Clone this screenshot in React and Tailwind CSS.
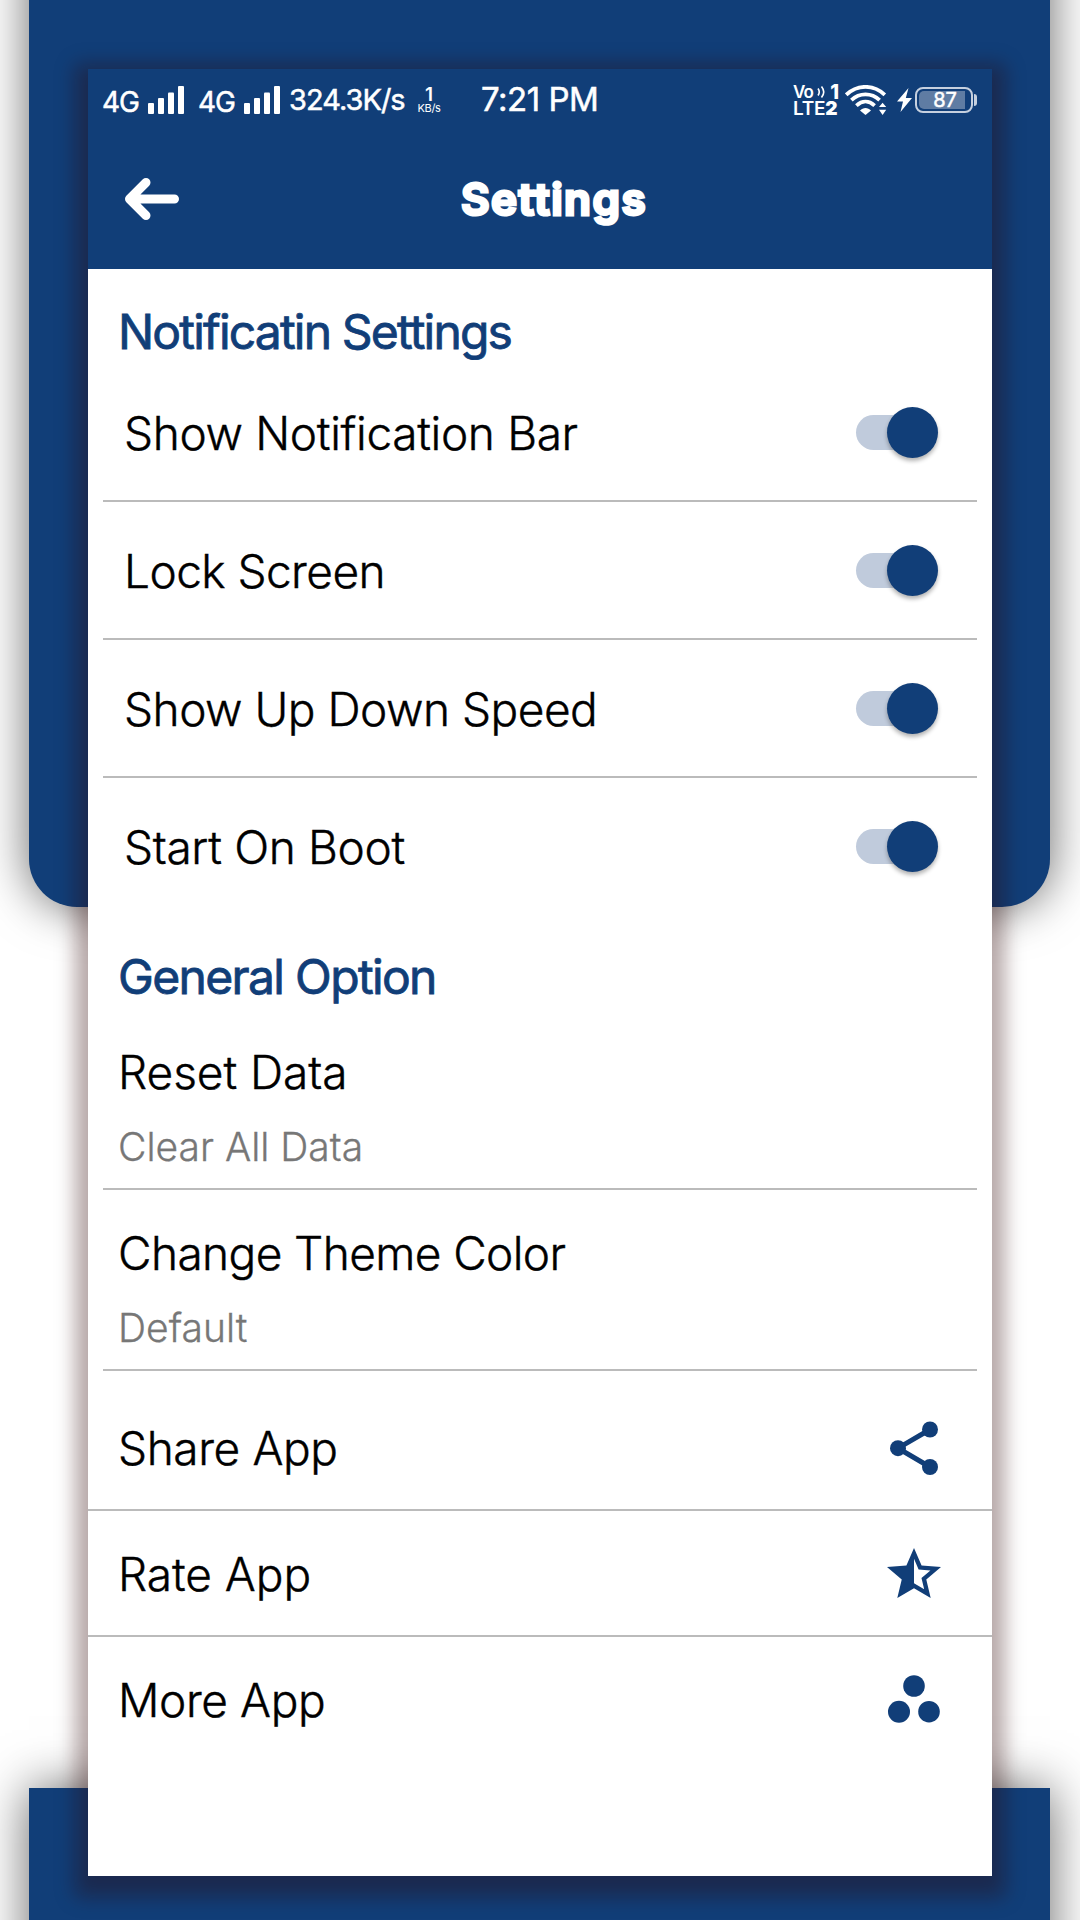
const toggles = [
    { label: "Show Notification Bar", tracking: "tracking-[-0.35px]" },
    { label: "Lock Screen", tracking: "tracking-[-0.55px]" },
    { label: "Show Up Down Speed", tracking: "tracking-[-0.5px]" },
    { label: "Start On Boot", tracking: "tracking-[-0.35px]" },
];

function Signal() {
    return (
        <svg width="36" height="28" viewBox="0 0 36 28" fill="#fff">
            <rect x="0" y="17" width="6" height="11" rx="1" />
            <rect x="10" y="12" width="6" height="16" rx="1" />
            <rect x="20" y="6.500" width="6" height="21.500" rx="1" />
            <rect x="30" y="0" width="6" height="28" rx="1" />
        </svg>
    );
}

function Wifi() {
    return (
        <svg width="42" height="30" viewBox="0 0 42 30" fill="none">
            <g stroke="#fff" strokeWidth="3.800">
                <path d="M1.200 9.800C12.500-.8 28.500-.8 39.800 9.800" />
                <path d="M6.400 15.200C14.500 7.400 26.500 7.400 34.600 15.200" />
                <path d="M11.400 20.600C17 15.400 24 15.400 29.600 20.600" />
            </g>
            <path d="M15 25.600C18 22 23 22 26 25.600L20.500 30Z" fill="#fff" />
            <path d="M34 22L37.600 17.800L41.200 22ZM34 24.800H41.200L37.600 30Z" fill="#fff" />
        </svg>
    );
}

function StatusBar() {
    return (
        <div className="flex h-[62px] items-center pl-[14px] text-white [-webkit-text-stroke:0.5px_white]">
            <span className="w-[46px] pt-[4px] text-[28px] tracking-[-1px]">4G</span>
            <Signal />
            <span className="ml-[14px] w-[46px] pt-[4px] text-[28px] tracking-[-1px]">4G</span>
            <Signal />
            <span className="ml-[9px] w-[118px] text-[29px] tracking-[-1px]">324.3K/s</span>
            <div className="ml-[9px] flex w-[26px] flex-col items-center [-webkit-text-stroke:0]">
                <span className="text-[19px] leading-[16px] font-semibold">1</span>
                <span className="text-[11px] leading-[11px] tracking-[-0.4px]">KB/s</span>
            </div>
            <span className="ml-[39px] w-[160px] text-[33px] tracking-[-0.5px] whitespace-nowrap">
                7:21 PM
            </span>
            <div className="ml-[152px] w-[46px] font-semibold [-webkit-text-stroke:0]">
                <div className="flex h-[16px] items-center justify-between">
                    <span className="text-[17px] leading-[16px] tracking-[-0.8px]">Vo</span>
                    <svg width="9" height="14" viewBox="0 0 9 14" fill="none" stroke="#fff" strokeWidth="1.600">
                        <path d="M1 3.500Q3.500 7 1 10.500M4.500 1.500Q9 7 4.500 12.500" />
                    </svg>
                    <span className="text-[20px] leading-[16px] font-extrabold">1</span>
                </div>
                <div className="h-[16px] text-[19px] leading-[17px] tracking-[-0.3px]">
                    LTE<b>2</b>
                </div>
            </div>
            <div className="ml-[6px]">
                <Wifi />
            </div>
            <svg className="ml-[10px]" width="15" height="24" viewBox="0 0 15 24" fill="#fff">
                <path d="M11.500 0L0 13.500H6L3.500 24L15 10H8.800Z" />
            </svg>
            <div className="ml-[3px] flex h-[26px] w-[58px] items-center rounded-[8px] border-2 border-[#c6d0df] p-[2px]">
                <div className="flex h-full w-[46px] items-center justify-center rounded-l-[5px] bg-[#5f7ca3] pl-[6px] text-[20px] leading-none">
                    87
                </div>
            </div>
            <div className="ml-[1px] h-[12px] w-[3px] rounded-r-full bg-[#c6d0df]" />
        </div>
    );
}

function Switch() {
    return (
        <div className="relative h-[35px] w-[82px]">
            <div className="h-full w-[70px] rounded-full bg-[#c0cbdc]" />
            <div className="absolute top-[-8px] right-0 h-[51px] w-[51px] rounded-full bg-[#113e78] shadow-[0_3px_4px_rgba(0,0,0,0.3)]" />
        </div>
    );
}

function Option({ title, value, tracking }) {
    return (
        <div className="mx-[15px] border-b-2 border-[#bbb] pl-[15px]">
            <div className={`text-[46px] leading-[70px] [-webkit-text-stroke:0.4px_black] ${tracking}`}>
                {title}
            </div>
            <div className="text-[39px] leading-[80px] text-[#777] [-webkit-text-stroke:0.3px_#777]">
                {value}
            </div>
            <div className="h-px" />
        </div>
    );
}

function ShareIcon() {
    return (
        <svg width="54" height="54" viewBox="0 0 54 54" fill="#113e78">
            <path d="M43 8.500L11 27.200L43 46" fill="none" stroke="#113e78" strokeWidth="5" />
            <circle cx="43" cy="8.500" r="8" />
            <circle cx="11" cy="27.200" r="8" />
            <circle cx="43" cy="46" r="8" />
        </svg>
    );
}

function StarIcon() {
    return (
        <svg width="54" height="50" viewBox="2 2 20 19" preserveAspectRatio="none" fill="#113e78">
            <path d="M22 9.240l-7.190-.62L12 2 9.190 8.630 2 9.240l5.460 4.730L5.820 21 12 17.270 18.180 21l-1.630-7.030L22 9.240zM12 15.400V6.100l1.710 4.040 4.380.38-3.320 2.880 1 4.280L12 15.400z" />
        </svg>
    );
}

function DotsIcon() {
    return (
        <svg width="54" height="48" viewBox="0 0 54 48" fill="#113e78">
            <circle cx="27" cy="11" r="10.800" />
            <circle cx="12" cy="36.700" r="11" />
            <circle cx="42" cy="36.700" r="10.800" />
        </svg>
    );
}

function Label({ children, tracking = "tracking-[-0.4px]" }) {
    return (
        <span className={`pt-[2px] text-[46px] [-webkit-text-stroke:0.4px_black] ${tracking}`}>
            {children}
        </span>
    );
}

export default function App() {
    return (
        <div className="relative h-[1920px] w-[1080px] overflow-hidden bg-white pt-[69px] font-['Inter',sans-serif]">
            <div className="absolute top-[-100px] left-[29px] h-[1007px] w-[1021px] rounded-b-[48px] bg-[#113e78] shadow-[0_0_48px_rgba(0,0,0,0.6)]" />
            <div className="absolute top-[1788px] left-[29px] h-[240px] w-[1021px] bg-[#113e78] shadow-[0_0_48px_rgba(0,0,0,0.6)]" />

            <div className="relative mx-[88px] h-[1807px] bg-white font-light text-black shadow-[0_8px_18px_13px_rgba(45,7,6,0.35)]">
                <header className="h-[200px] bg-[#113e78] font-normal">
                    <StatusBar />
                    <div className="flex h-[135px] items-center pl-[36px] text-white">
                        <svg width="56" height="44" viewBox="0 0 56 44" fill="none" stroke="#fff" strokeWidth="9" strokeLinecap="round" strokeLinejoin="round">
                            <path d="M22 5.500L5.500 22L22 38.500M8 22H50.500" />
                        </svg>
                        <h1 className="ml-[281px] text-[44px] leading-[60px] font-semibold tracking-[1.450px] [-webkit-text-stroke:3px_white] [stroke-linejoin:round]">
                            Settings
                        </h1>
                    </div>
                </header>

                <h2 className="pt-[31px] pl-[30px] text-[48px] leading-[64px] font-normal tracking-[-1.820px] text-[#113e78] [-webkit-text-stroke:0.8px_#113e78]">
                    Notificatin Settings
                </h2>
                {toggles.map(({ label, tracking }) => (
                    <div
                        key={label}
                        className="mx-[15px] flex h-[138px] items-center justify-between border-b-2 border-[#bbb] pr-[39px] pl-[21px] [&:nth-of-type(4)]:border-transparent"
                    >
                        <Label tracking={tracking}>{label}</Label>
                        <Switch />
                    </div>
                ))}

                <h2 className="pl-[30px] text-[48px] leading-[121px] font-normal tracking-[-1.650px] text-[#113e78] [-webkit-text-stroke:0.8px_#113e78]">
                    General Option
                </h2>
                <Option title="Reset Data" value="Clear All Data" tracking="tracking-[-0.05px]" />
                <div className="pt-[28px]">
                    <Option title="Change Theme Color" value="Default" tracking="tracking-[-0.6px]" />
                </div>

                <div className="flex h-[140px] items-center justify-between border-b-2 border-[#bbb] pt-[15px] pr-[51px] pl-[30px]">
                    <Label>Share App</Label>
                    <ShareIcon />
                </div>
                <div className="flex h-[126px] items-center justify-between border-b-2 border-[#bbb] pr-[51px] pl-[30px]">
                    <Label tracking="tracking-[-0.05px]">Rate App</Label>
                    <StarIcon />
                </div>
                <div className="flex h-[124px] items-center justify-between pr-[51px] pl-[30px]">
                    <Label>More App</Label>
                    <DotsIcon />
                </div>
            </div>
        </div>
    );
}
